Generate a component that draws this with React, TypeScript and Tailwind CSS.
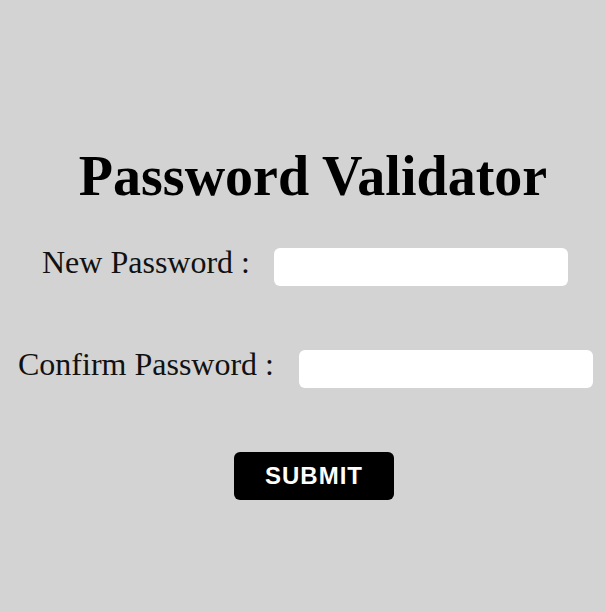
export default function App() {
  return (
    <div className="min-h-[612px] w-full bg-[#d3d3d3] pt-[144px] font-['Liberation_Serif',_'Times_New_Roman',serif] text-black">
      <h1 className="flex justify-center pl-[21px] text-[56px] font-bold leading-[64px]">
        Password Validator
      </h1>

      <form
        className="mt-[35px] flex flex-col items-center"
        onSubmit={(e) => e.preventDefault()}
      >
        <div className="flex items-start gap-[24px] pl-[5px]">
          <label htmlFor="new-password" className="text-[32px] leading-[38px] text-[#111]">
            New Password :
          </label>
          <input
            id="new-password"
            type="password"
            className="mt-[5px] h-[38px] w-[294px] rounded-[6px] border-0 bg-white px-2 outline-none"
          />
        </div>

        <div className="mt-[59px] flex items-start gap-[25px] pl-[6px]">
          <label htmlFor="confirm-password" className="text-[32px] leading-[38px] text-[#111]">
            Confirm Password :
          </label>
          <input
            id="confirm-password"
            type="password"
            className="mt-[5px] h-[38px] w-[294px] rounded-[6px] border-0 bg-white px-2 outline-none"
          />
        </div>

        <button
          type="submit"
          className="ml-[23px] mt-[64px] h-[48px] w-[160px] rounded-[6px] bg-black font-['Liberation_Sans',Arial,sans-serif] text-[24px] font-bold tracking-[1px] text-white"
        >
          SUBMIT
        </button>
      </form>
    </div>
  );
}
